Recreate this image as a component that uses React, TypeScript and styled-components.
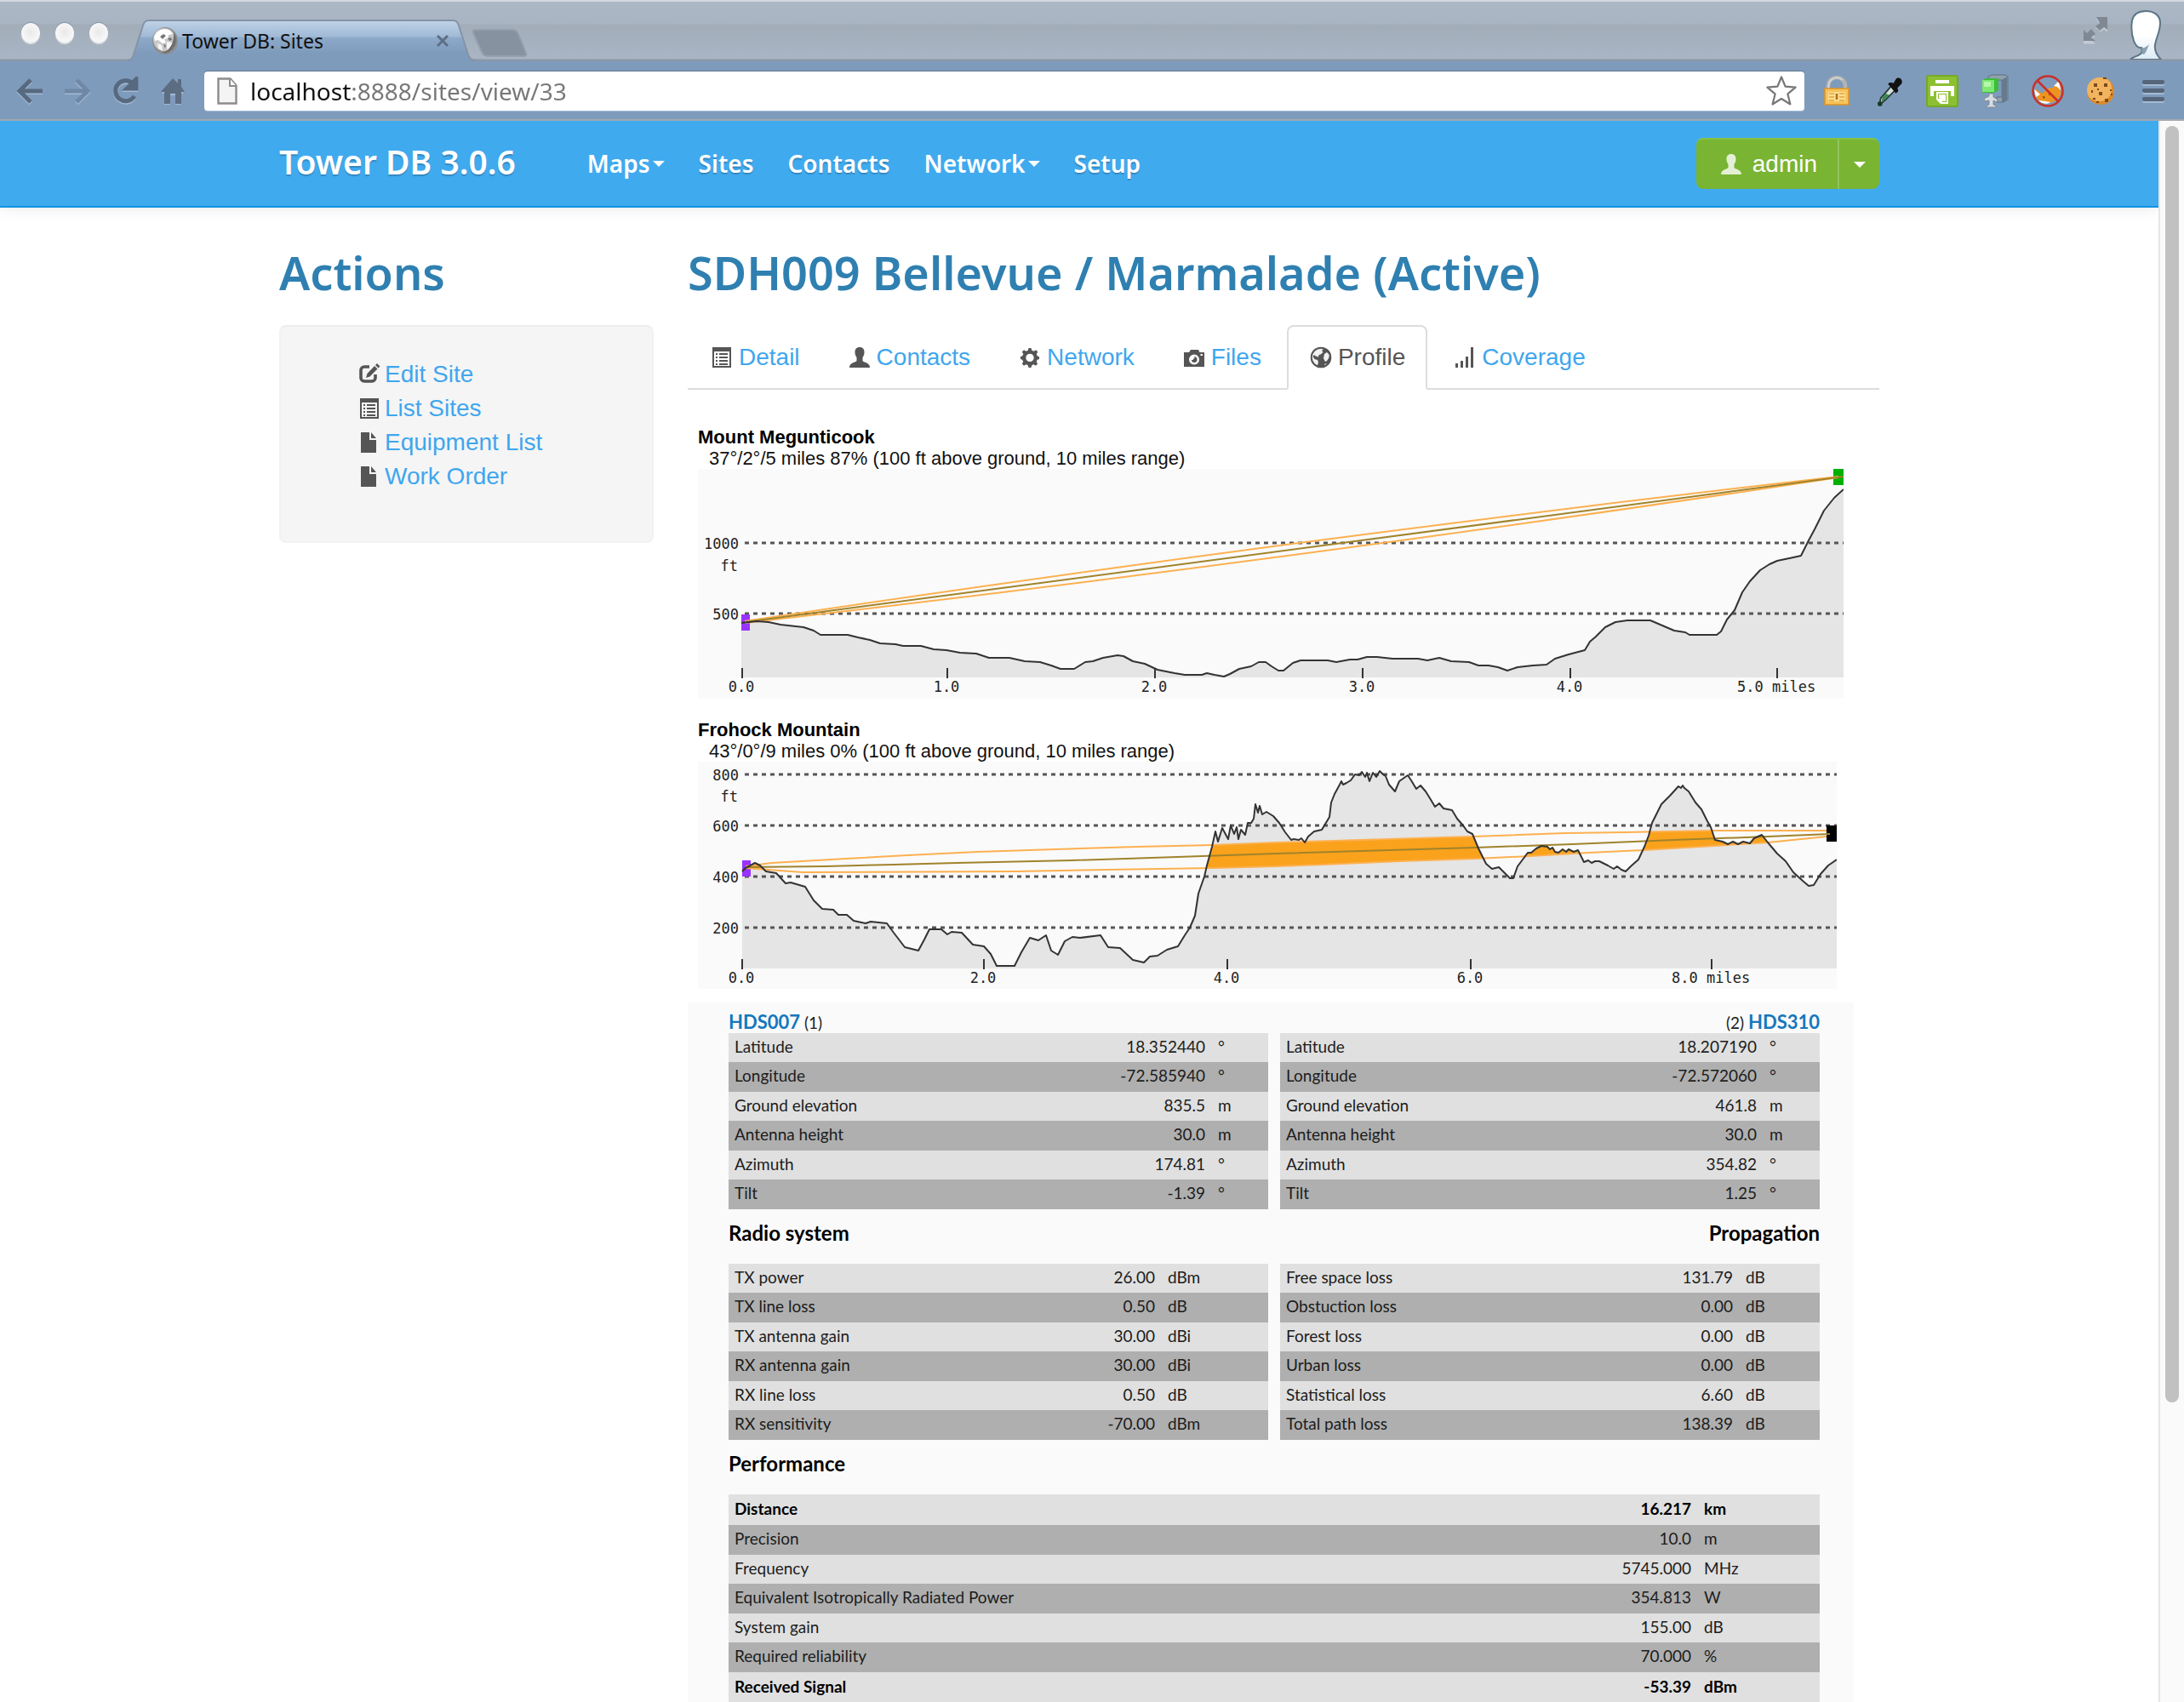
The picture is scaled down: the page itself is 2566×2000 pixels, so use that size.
import React from 'react';
import styled, { createGlobalStyle, css } from 'styled-components';

const ui = '"Noto Sans", "Open Sans", sans-serif';
const body = '"Liberation Sans", Arial, sans-serif';
const report = 'Lato, "Open Sans", sans-serif';

const GlobalStyle = createGlobalStyle`
  *, *::before, *::after { box-sizing: border-box; }
  html, body { margin: 0; background: #fff; }
  button { font: inherit; color: inherit; background: none; border: 0; padding: 0; cursor: pointer; }
  a { color: #40a6ee; text-decoration: none; }
  ul { list-style: none; margin: 0; padding: 0; }
  h1, h2, h3, p { margin: 0; }
  svg { display: block; flex: none; }
`;

const Window = styled.div`
  display: flex;
  flex-direction: column;
  height: 100vh;
  overflow: hidden;
  font-family: ${body};
  font-size: 28px;
  color: #555;
`;

/* ---------- browser frame ---------- */

const TabStrip = styled.header`
  display: flex;
  align-items: flex-end;
  height: 72px;
  flex: none;
  padding-left: 25px;
  border-top: 2px solid #d2d9e0;
  background: linear-gradient(#abb7c5 0, #a8b4c1 26px, #a2adb9 27px, #a9b5c4 67px, #8b98a8 68px);
`;

const Lights = styled.div`
  display: flex;
  gap: 18px;
  align-self: flex-start;
  margin-top: 25px;
  width: 125px;
`;

const Light = styled.button`
  width: 22px;
  height: 24px;
  border-radius: 50%;
  background: radial-gradient(circle at 50% 45%, #e9e9e9 0, #f7f7f7 60%, #dcdfe2 100%);
  box-shadow: 0 -1px 1px #8792a0, 0 1px 1px #d5dde6;
`;

const Tab = styled.div`
  position: relative;
  display: flex;
  align-items: center;
  width: 410px;
  height: 49px;
  padding: 0 32px 0 28px;
  font-family: ${ui};
  font-size: 23px;
  color: #111;
`;

const TabShape = styled.svg`
  position: absolute;
  left: 0;
  bottom: 0;
`;

const TabLabel = styled.span`
  position: relative;
  flex: 1;
  margin-left: 4px;
  white-space: nowrap;
`;

const Above = styled.span`
  position: relative;
  display: flex;
`;

const CloseTab = styled.button`
  position: relative;
  display: flex;
`;

const NewTab = styled.button`
  margin: 0 auto 5px -6px;
`;

const WindowTools = styled.div`
  display: flex;
  align-items: flex-start;
  align-self: stretch;
  gap: 24px;
  padding: 9px 25px 0 0;
`;

const FullscreenButton = styled.button`
  padding-top: 8px;
`;

const Toolbar = styled.div`
  display: flex;
  align-items: center;
  height: 70px;
  flex: none;
  padding: 2px 5px 0 7px;
  background: #7f9bbc;
  border-bottom: 2px solid #a3a9b0;
`;

const ToolButton = styled.button<{ $w: number }>`
  display: flex;
  align-items: center;
  justify-content: center;
  width: ${(p) => p.$w}px;
  height: 48px;
  flex: none;
`;

const Omnibox = styled.label`
  display: flex;
  align-items: center;
  flex: 1;
  height: 46px;
  margin: 0 7px 0 9px;
  padding: 0 8px 0 15px;
  background: #fff;
  border-radius: 4px;
  box-shadow: 0 -1px 1px #5f7690, 0 1px 1px #a9bfd8;
`;

const UrlInput = styled.input`
  flex: 1;
  min-width: 0;
  margin-left: 15px;
  padding: 0;
  border: 0;
  outline: 0;
  font: 28px ${ui};
  color: transparent;
  background: linear-gradient(90deg, #111 119px, #777 119px);
  -webkit-background-clip: text;
  background-clip: text;
`;

const Viewport = styled.div`
  display: flex;
  flex: 1;
  min-height: 0;
`;

const Page = styled.div`
  flex: 1;
  min-width: 0;
  overflow: hidden;
  background: #fff;
`;

const ScrollTrack = styled.div`
  width: 30px;
  flex: none;
  padding: 6px 6px 0 6px;
  border-left: 2px solid #e6e6e6;
  background: #fafafa;
`;

const ScrollThumb = styled.div`
  width: 16px;
  height: 81%;
  border-radius: 8px;
  background: #c1c1c1;
`;

/* ---------- site ---------- */

const Container = styled.div`
  display: flex;
  max-width: 1880px;
  margin: 0 auto;
`;

const Navbar = styled.nav`
  height: 102px;
  background: #40aaef;
  border-bottom: 2px solid #1392e0;
  box-shadow: 0 2px 16px rgba(0, 0, 0, 0.08);
  color: #fff;
  font-family: ${ui};
  text-shadow: 0 2px 1px rgba(0, 0, 0, 0.2);
  ${Container} {
    align-items: center;
    height: 100px;
  }
`;

const Brand = styled.a`
  color: #fff;
  font-size: 39px;
  font-weight: 600;
  margin: 0 84px 6px 0;
`;

const NavList = styled.ul`
  display: flex;
  gap: 40px;
  flex: 1;
  font-size: 28px;
  font-weight: 600;
`;

const navItem = css`
  display: flex;
  align-items: center;
  gap: 3px;
  color: #fff;
`;

const NavLink = styled.a`
  ${navItem}
`;

const NavButton = styled.button`
  ${navItem}
`;

const Caret = styled.span`
  border: 7px solid transparent;
  border-top-color: #fff;
  border-bottom: 0;
`;

const UserGroup = styled.div`
  display: flex;
  height: 60px;
  border-radius: 8px;
  overflow: hidden;
  background: #79b433;
  border-top: 2px solid #86c244;
  font-family: ${body};
  font-size: 28px;
`;

const UserButton = styled.button`
  display: flex;
  align-items: center;
  gap: 11px;
  padding: 0 24px 0 27px;
  border-right: 2px solid #93c45c;
`;

const UserToggle = styled.button`
  display: flex;
  align-items: center;
  justify-content: center;
  width: 47px;
`;

const Columns = styled(Container)`
  gap: 40px;
  padding-top: 36px;
`;

const Sidebar = styled.aside`
  width: 440px;
  flex: none;
`;

const Main = styled.main`
  flex: 1;
  min-width: 0;
`;

const Heading = styled.h2`
  margin-bottom: 22px;
  font: 600 54px/80px ${ui};
  color: #2f80b1;
  white-space: nowrap;
`;

const Well = styled.div`
  height: 256px;
  padding: 36px 38px 0 90px;
  border: 2px solid #f2f2f2;
  border-top-color: #ededed;
  border-radius: 8px;
  background: #f5f5f5;
`;

const ActionItem = styled.li`
  a {
    display: flex;
    align-items: center;
    gap: 4px;
    height: 40px;
  }
`;

const Tabs = styled.ul`
  display: flex;
  gap: 4px;
  border-bottom: 2px solid #ddd;
`;

const TabItem = styled.li<{ $active?: boolean }>`
  margin-bottom: -2px;
  a {
    display: flex;
    align-items: center;
    gap: 6px;
    height: 76px;
    padding: 0 24px;
    border: 2px solid transparent;
    border-radius: 8px 8px 0 0;
    ${(p) =>
      p.$active &&
      css`
        color: #555;
        background: #fff;
        border-color: #ddd;
        border-bottom-color: #fff;
      `}
  }
`;

const Profiles = styled.div`
  display: grid;
  gap: 24px;
  padding: 43px 0 16px 12px;
`;

const ProfileTitle = styled.h3`
  font-size: 22px;
  line-height: 25px;
  color: #000;
`;

const ProfileInfo = styled.p`
  padding-left: 13px;
  font-size: 22px;
  line-height: 25px;
  color: #111;
`;

const Chart = styled.svg`
  max-width: 100%;
  height: auto;
  text {
    font-family: "DejaVu Sans Mono", "Liberation Mono", monospace;
    font-size: 17px;
    fill: #222;
  }
`;

const Report = styled.section`
  max-width: 1370px;
  padding: 0 40px 40px 48px;
  background: #fafafa;
  font-family: ${report};
  font-size: 19px;
  color: #1c1c1c;
`;

const ReportHead = styled.div<{ $top?: boolean }>`
  display: flex;
  justify-content: space-between;
  height: ${(p) => (p.$top ? 36 : 64)}px;
  padding-top: ${(p) => (p.$top ? 6 : 11)}px;
  line-height: 34px;
`;

const ReportTitle = styled.h3`
  font-size: 24px;
  color: #000;
`;

const SiteName = styled.div`
  a {
    font-size: 22px;
    font-weight: 700;
    color: #1478bd;
  }
`;

const Pair = styled.div`
  display: grid;
  grid-template-columns: 1fr 1fr;
  gap: 14px;
`;

const Data = styled.table<{ $unit: number }>`
  width: 100%;
  border-collapse: collapse;
  table-layout: fixed;
  th,
  td {
    height: 34px;
    padding: 0 0 3px;
    font-weight: 400;
    line-height: 30px;
  }
  th {
    padding-left: 7px;
    text-align: left;
  }
  td {
    width: 200px;
    text-align: right;
  }
  td:last-child {
    width: ${(p) => p.$unit}px;
    padding-left: 15px;
    text-align: left;
  }
`;

const DataRow = styled.tr<{ $strong?: boolean }>`
  background: #e0e0e0;
  &:nth-child(even) {
    background: #afafaf;
  }
  &:nth-child(even) th,
  &:nth-child(even) td {
    height: 35px;
  }
  ${(p) =>
    p.$strong &&
    css`
      && th,
      && td {
        height: 36px;
        font-weight: 700;
        color: #000;
      }
    `}
`;

/* ---------- icons ---------- */

type GlyphName = 'edit' | 'list' | 'file' | 'user' | 'cog' | 'camera' | 'globe' | 'signal';

const glyphs: Record<GlyphName, React.ReactNode> = {
  edit: (
    <>
      <path d="M14 5H8a4 4 0 0 0-4 4v9a4 4 0 0 0 4 4h9a4 4 0 0 0 4-4v-4" fill="none" stroke="currentColor" strokeWidth="3.6" />
      <path d="M10 18l1.500-5L20 4l3.500 3.500-9 9z" />
      <path d="M21 3l2-2 3.500 3.500-2 2z" />
    </>
  ),
  list: (
    <>
      <path fillRule="evenodd" d="M3 2h22v24H3zm2 5v17h18V7z" />
      <path d="M7 9h2v2H7zm4 0h10v2H11zM7 13h2v2H7zm4 0h10v2H11zM7 17h2v2H7zm4 0h10v2H11zM7 21h2v2H7zm4 0h10v2H11z" />
    </>
  ),
  file: <path d="M4 2h10v9h8v15H4zM16 2l6 7h-6z" />,
  user: <path d="M14 2c4 0 5.500 2.500 5.500 6 0 3-1 4.500-2 6v4c1 2 8.500 2 8.500 8H2c0-6 7.500-6 8.500-8v-4c-1-1.500-2-3-2-6 0-3.500 1.500-6 5.500-6z" />,
  cog: (
    <path
      fillRule="evenodd"
      d="M12.500 3h3l.8 2.800 2.300 1 2.600-1.500 2.100 2.200-1.500 2.600 1 2.300L25 13v3l-2.300.7-1 2.300 1.400 2.500-2.100 2.200-2.500-1.500-2.300 1L15.500 26h-3l-.8-2.800-2.200-1L7 23.700l-2.200-2.200L6.200 19l-1-2.300L3 16v-3l2.300-.7 1-2.300-1.500-2.500L7 5.300l2.500 1.500 2.300-1zM14 9.700a4.700 4.700 0 1 0 0 9.400 4.700 4.700 0 0 0 0-9.400z"
    />
  ),
  camera: (
    <path
      fillRule="evenodd"
      d="M10 5h9l1.500 3H26v17H2V8h6zM14 10.500a6 6 0 1 0 0 12 6 6 0 0 0 0-12zM21.500 10v2h2.500v-2zM14 13a3.500 3.500 0 1 1 0 7c-1.900 0-3-1.300-3-3h1.800c0-1.200.7-2 1.900-2z"
    />
  ),
  globe: (
    <>
      <circle cx="14" cy="14" r="12" />
      <path fill="#fff" d="M9 4c3-1 6-1 8 0l-2 2 1.500 2-3 2.500-2 .5-.5 2.500-3-1L6 11l-1.500 2 2 3 3.500 1 1 3-1.500 4c-4-2-6.500-5-6.500-10C3 9 6 5.500 9 4zM18 10l3-2 3 3-1 4-2 3-2 1-2-4zM18 22l3-1-2 3z" opacity=".92" />
      <circle cx="14" cy="14" r="11.300" fill="none" stroke="currentColor" strokeWidth="2" />
    </>
  ),
  signal: <path d="M3 21h3v5H3zm6-3h3v8H9zm6-5h3v13h-3zm6-11h3v24h-3z" />,
};

const Glyph = ({ name, color = '#555' }: { name: GlyphName; color?: string }) => (
  <svg width="28" height="28" viewBox="0 0 28 28" fill="currentColor" color={color} aria-hidden="true">
    {glyphs[name]}
  </svg>
);

const NavIcon = ({ d, faded }: { d: string; faded?: boolean }) => (
  <svg width="32" height="34" viewBox="0 0 32 34" fill="none" aria-hidden="true">
    <path d={d} stroke="#a3bad4" strokeWidth="5" transform="translate(0 1.5)" />
    <path d={d} stroke={faded ? '#6f88a6' : '#57697f'} strokeWidth="5" />
  </svg>
);

const LockIcon = () => (
  <svg width="34" height="36" viewBox="0 0 34 36" aria-hidden="true">
    <path d="M7 16v-4a10 10 0 0 1 20 0v4" fill="none" stroke="#b4b4b4" strokeWidth="4.500" />
    <path d="M7.500 16v-4a9.500 9.500 0 0 1 16-7" fill="none" stroke="#d9d9d9" strokeWidth="1.500" />
    <rect x="3" y="15" width="28" height="19" fill="#f7c35a" stroke="#dd9426" strokeWidth="1.500" />
    <path d="M7 19h20v11H7z" fill="#fbdf92" />
    <path d="M8 21h6m6 0h6M8 25h6m6 0h6M8 29h6m6 0h6" stroke="#e2a63b" strokeWidth="1.500" />
    <path d="M17 21v7" stroke="#b06f10" strokeWidth="2.500" />
  </svg>
);

const DropperIcon = () => (
  <svg width="30" height="38" viewBox="0 0 32 38" aria-hidden="true">
    <path d="M18 13l5 5-12 12-5 4-2-1 1-5z" fill="#cfe0dc" stroke="#2c3a3a" strokeWidth="2" />
    <path d="M11 22l5 2-6 6-4 3 1-6z" fill="#3f8a55" />
    <path d="M14 10l3-2 4 1 3-5c3-4 10 0 7 6l-5 5 1 4-3 3z" fill="#111" />
    <circle cx="4" cy="35" r="3" fill="#173c24" />
  </svg>
);

const PrinterIcon = () => (
  <svg width="38" height="38" viewBox="0 0 38 38" aria-hidden="true">
    <rect x="1" y="1" width="36" height="36" rx="2" fill="#8cc032" stroke="#77a82a" strokeWidth="2" />
    <path d="M11 6h16v4H11zM5 13h28v12h-4v-6H9v6H5z" fill="#fff" />
    <path d="M12 20h14v14h-9l-5-5z" fill="#fff" />
    <path d="M14 22h10v10h-5v-4h-5z" fill="#8cc032" />
    <path d="M15 23h8v8h-3l-5-4z" fill="#fff" />
  </svg>
);

const ClampIcon = () => (
  <svg width="32" height="40" viewBox="0 0 32 40" aria-hidden="true">
    <path d="M8 3l4-2h16l3 2v27l-5 3h-8v-6h6V7H8z" fill="#8fa0ae" stroke="#5f7182" />
    <path d="M24 7l6-4v27l-4 3h-2z" fill="#667a8c" />
    <path d="M1 7l4-2h15v14l-5 3H1z" fill="#3dbb3d" />
    <path d="M1 7h14v14H1z" fill="#7de872" />
    <path d="M3 9h8v6H3z" fill="#b6f7aa" />
    <path d="M9 23h5v4l5 3-1 3-4-2v5l3 1v2H6v-2l3-1v-5l-5 1-1-3 6-3z" fill="#d6dde2" stroke="#7e8b96" />
  </svg>
);

const NoFoxIcon = () => (
  <svg width="40" height="40" viewBox="0 0 40 40" aria-hidden="true">
    <path d="M5 17l8 6 7-6 6-1 8-9 1 14c1 5-5 11-10 12-8 2-17-1-19-7z" fill="#ef9320" />
    <path d="M27 14l6-6 2 11-4-4zM4 18l7 6-5 3zM9 31c4 4 11 5 14 2l-6-1z" fill="#fff" />
    <path d="M14 26l3 1-2 2zM21 22l4 1-4 2z" fill="#6b3b08" />
    <circle cx="20" cy="20" r="17.500" fill="none" stroke="#c9302a" strokeWidth="2.500" />
    <path d="M8 8l24 24" stroke="#c9302a" strokeWidth="2.500" />
  </svg>
);

const CookieIcon = () => (
  <svg width="36" height="36" viewBox="0 0 36 36" aria-hidden="true">
    <path d="M18 2c9 0 15 6 16 15s-6 17-15 17S2 28 2 19 9 2 18 2z" fill="#dc8a28" />
    <path d="M17 2c9 0 14 5 14 13s-5 15-14 15S2 25 2 17 8 2 17 2z" fill="#f2b45e" />
    <g fill="#7d4a1c">
      <path d="M10 9h4v4h-4zM22 9h4v4h-4zM16 19h4v4h-4zM23 27h4v4h-4zM21 2h4v2h-4z" />
      <path d="M7 17h2v3H7zM29 16h2v2h-2zM30 21h2v2h-2zM14 15h2v2h-2zM9 26h3v2H9zM13 30h3v2h-3z" />
    </g>
  </svg>
);

const MenuIcon = () => (
  <svg width="28" height="32" viewBox="0 0 28 32" aria-hidden="true">
    <g fill="#a3bad4">
      <rect x="1" y="5" width="26" height="5" rx="2" />
      <rect x="1" y="15" width="26" height="5" rx="2" />
      <rect x="1" y="25" width="26" height="5" rx="2" />
    </g>
    <g fill="#566579">
      <rect x="1" y="3" width="26" height="5" rx="2" />
      <rect x="1" y="13" width="26" height="5" rx="2" />
      <rect x="1" y="23" width="26" height="5" rx="2" />
    </g>
  </svg>
);

const StarIcon = () => (
  <svg width="38" height="38" viewBox="0 0 38 38" aria-hidden="true">
    <path d="M19 2.500l4.600 11.200 12 .9-9.200 7.800 3 12.100L19 28l-10.400 6.500 3-12.100-9.200-7.800 12-.9z" fill="#fff" stroke="#777" strokeWidth="2.200" strokeLinejoin="round" />
  </svg>
);

const PageIcon = () => (
  <svg width="24" height="32" viewBox="0 0 24 32" aria-hidden="true">
    <path d="M1.500 1.500h14l7 8v21h-21z" fill="#f4f4f4" stroke="#8c8c8c" strokeWidth="2.400" />
    <path d="M15 1.500V10h7.500" fill="#fff" stroke="#8c8c8c" strokeWidth="2" />
  </svg>
);

const Favicon = () => (
  <svg width="32" height="34" viewBox="0 0 32 34" aria-hidden="true">
    <ellipse cx="16" cy="17" rx="15" ry="16" fill="#8d8d8d" />
    <ellipse cx="15" cy="15.500" rx="13" ry="13.500" fill="#c9c9c9" />
    <path d="M6 7c4-4 11-5 16-2l3 4-5 1-1 4-4 1 2 4-4 1-5-4-4 1-1-5z" fill="#fff" />
    <path d="M18 18l6 1 3 5-5 6-4-4zM7 20l5 2 1 7-5-3z" fill="#f5f5f5" />
    <path d="M10 12l4-3 3 2-4 4zM19 14l4-1 1 3-3 1zM14 21l3 1-1 4z" fill="#777" />
    <path d="M26 7c4 6 4 15-2 21-3 3-8 4-12 3 7-1 15-9 14-24z" fill="#6e6e6e" />
  </svg>
);

const AvatarIcon = () => (
  <svg width="40" height="59" viewBox="0 0 40 59" aria-hidden="true">
    <defs>
      <linearGradient id="head" x1="0" y1="0" x2="0" y2="1">
        <stop offset=".5" stopColor="#fff" />
        <stop offset="1" stopColor="#dcecf5" />
      </linearGradient>
    </defs>
    <path
      d="M2 59c3-4 11-4 13-8 1-2 1-4 0-6-4 1-7-3-9-8C3 29 3 20 4 13 6 5 13 2 20 2c10 0 17 5 17 14 0 11-5 17-6 26-1 7 2 12 7 17z"
      fill="url(#head)"
      stroke="#5c7586"
      strokeWidth="2"
    />
    <path d="M15 45c3 1 6-1 9-4-2 5-3 9-6 12l-3-1c1-2 1-5 0-7z" fill="#8aa3b2" />
  </svg>
);

const FullscreenIcon = () => (
  <svg width="30" height="34" viewBox="0 0 30 34" aria-hidden="true">
    <path d="M16 2h13v15l-4-3-4 3-6-5 4-5zM1 17l4 4 4-4 5 5-4 5 5 4H1z" fill="#c3ccd6" transform="translate(0 1.500)" />
    <path d="M16 1h13v15l-4-3-5 4-5-5 5-4zM1 16l4 4 5-5 5 6-5 4 5 4H1z" fill="#7f8893" />
  </svg>
);

/* ---------- elevation profiles ---------- */

interface ProfileData {
  title: string;
  info: string;
  box: [number, number, number, number];
  left: number;
  base: number;
  terrain: string;
  grid: { y: number; label: string }[];
  unitY: number;
  ticks: { x: number; label: string }[];
  miles: string;
  upper: string;
  center: string;
  lower: string;
  start: [number, number];
  end: [number, number];
  endColor: string;
}

const profiles: ProfileData[] = [
  {
    title: 'Mount Megunticook',
    info: '37°/2°/5 miles 87% (100 ft above ground, 10 miles range)',
    box: [820, 551, 1346, 270],
    left: 871,
    base: 796,
    terrain:
      '871,732 889,730 903,731 917,734 944,737 956,741 964,746 996,746 1008,749 1022,752 1034,756 1052,757 1061,759 1082,759 1097,763 1112,764 1128,767 1147,768 1162,773 1186,773 1204,777 1222,778 1235,782 1246,786 1262,786 1275,778 1284,777 1296,773 1313,770 1320,771 1331,777 1345,780 1360,787 1380,791 1392,793 1412,793 1418,791 1427,793 1438,795 1445,792 1456,786 1470,783 1479,778 1487,778 1494,783 1502,788 1508,788 1519,779 1528,776 1560,776 1570,778 1586,775 1595,775 1606,772 1618,772 1636,774 1666,774 1677,776 1691,773 1705,777 1726,778 1737,782 1749,782 1760,784 1771,788 1783,784 1801,782 1817,781 1827,774 1843,769 1862,764 1868,754 1875,748 1886,737 1898,731 1912,729 1939,729 1953,735 1967,741 1980,743 1985,746 2017,746 2022,742 2029,728 2038,717 2047,696 2056,683 2068,670 2079,663 2088,659 2107,655 2116,653 2125,635 2132,622 2143,600 2155,585 2166,575',
    grid: [
      { y: 638, label: '1000' },
      { y: 721, label: '500' },
    ],
    unitY: 671,
    ticks: [
      { x: 872, label: '0.0' },
      { x: 1113, label: '1.0' },
      { x: 1357, label: '2.0' },
      { x: 1601, label: '3.0' },
      { x: 1845, label: '4.0' },
      { x: 2088, label: '5.0' },
    ],
    miles: '5.0 miles',
    upper: 'M875 730Q1520 633 2160 560',
    center: 'M875 731L2166 560',
    lower: 'M875 732Q1520 658 2160 561',
    start: [871, 722],
    end: [2154, 551],
    endColor: '#00b000',
  },
  {
    title: 'Frohock Mountain',
    info: '43°/0°/9 miles 0% (100 ft above ground, 10 miles range)',
    box: [820, 895, 1338, 267],
    left: 872,
    base: 1138,
    terrain:
      '872,1024 876,1020 887,1014 893,1017 900,1024 912,1026 923,1038 929,1037 946,1042 956,1058 966,1068 979,1069 985,1075 995,1075 1003,1082 1017,1085 1023,1083 1042,1085 1050,1096 1063,1113 1079,1117 1086,1104 1092,1092 1106,1092 1113,1098 1118,1095 1130,1096 1143,1110 1156,1112 1164,1121 1171,1135 1192,1135 1200,1119 1210,1102 1220,1105 1229,1099 1235,1117 1243,1122 1251,1106 1260,1101 1269,1102 1293,1099 1302,1113 1316,1114 1331,1128 1344,1131 1351,1124 1360,1123 1371,1116 1384,1112 1392,1099 1398,1090 1404,1076 1408,1050 1415,1030 1418,1017 1424,995 1428,977 1431,989 1436,973 1443,986 1446,970 1450,980 1453,972 1455,986 1458,975 1463,981 1466,967 1470,967 1473,962 1475,945 1478,955 1480,947 1483,957 1488,954 1496,959 1503,967 1510,978 1517,987 1520,986 1526,987 1529,985 1533,990 1537,983 1544,977 1553,975 1559,965 1562,960 1564,943 1568,933 1574,922 1576,918 1578,922 1582,920 1587,917 1592,910 1597,911 1600,907 1604,913 1606,908 1609,918 1613,908 1617,913 1621,906 1625,910 1628,912 1632,922 1639,930 1644,918 1654,911 1658,917 1664,927 1669,923 1675,930 1680,938 1686,948 1691,944 1696,950 1706,952 1712,962 1719,970 1724,977 1730,980 1737,997 1746,1015 1753,1021 1761,1019 1774,1032 1778,1032 1783,1018 1795,1002 1799,1002 1805,997 1811,994 1818,995 1821,998 1824,996 1827,1001 1831,1002 1836,998 1840,1001 1843,998 1849,1001 1854,999 1861,1013 1866,1011 1870,1014 1874,1012 1879,1012 1889,1017 1896,1021 1900,1018 1905,1022 1910,1024 1916,1018 1925,1010 1932,995 1937,982 1941,967 1952,945 1962,935 1972,924 1975,926 1977,923 1979,926 1984,930 1992,943 1999,951 2006,965 2010,972 2015,987 2024,989 2030,992 2036,989 2042,992 2048,989 2056,991 2061,985 2070,981 2077,990 2088,1003 2098,1012 2107,1025 2118,1035 2125,1041 2131,1040 2139,1027 2148,1017 2158,1010',
    grid: [
      { y: 910, label: '800' },
      { y: 970, label: '600' },
      { y: 1030, label: '400' },
      { y: 1090, label: '200' },
    ],
    unitY: 942,
    ticks: [
      { x: 872, label: '0.0' },
      { x: 1156, label: '2.0' },
      { x: 1442, label: '4.0' },
      { x: 1728, label: '6.0' },
      { x: 2011, label: '8.0' },
    ],
    miles: '8.0 miles',
    upper: 'M876 1018L907 1014 994 1009 1066 1005 1148 1001 1240 998 1336 995 1425 993 1500 990 1599 987 1730 983 1838 979 1909 978 2013 976 2146 976',
    center: 'M876 1019L970 1018 1050 1016 1124 1014 1260 1011 1383 1007 1500 1003 1599 1000 1733 996 1847 992 1967 987 2077 983 2150 980',
    lower: 'M876 1020L889 1021 943 1025 1195 1024 1299 1022 1425 1020 1500 1018 1553 1016 1645 1012 1733 1009 1797 1006 1866 1002 1930 999 2013 994 2077 990 2146 983',
    start: [872, 1011],
    end: [2146, 970],
    endColor: '#000',
  },
];

const beamArea = (upper: string, lower: string) => {
  const back = lower
    .replace(/[ML]/g, ' ')
    .trim()
    .split(/\s+/)
    .reduce<string[][]>((acc, n, i) => {
      if (i % 2 === 0) acc.push([n]);
      else acc[acc.length - 1].push(n);
      return acc;
    }, [])
    .reverse()
    .map((p) => p.join(' '))
    .join(' ');
  return `${upper} ${back}Z`;
};

const ProfileChart = ({ p, obstructed }: { p: ProfileData; obstructed: boolean }) => {
  const [x, y, w, h] = p.box;
  const right = x + w;
  const clip = `terrain-${p.left}-${p.base}`;
  const area = `${p.left},${p.base} ${p.terrain} ${right},${p.base}`;
  return (
    <section>
      <ProfileTitle>{p.title}</ProfileTitle>
      <ProfileInfo>{p.info}</ProfileInfo>
      <Chart width={w} height={h} viewBox={p.box.join(' ')} role="img" aria-label={`${p.title} elevation profile`}>
        <defs>
          <clipPath id={clip}>
            <polygon points={area} />
          </clipPath>
        </defs>
        <rect x={x} y={y} width={w} height={h} fill="#fafafa" />
        <polygon points={area} fill="#e5e5e5" />
        {p.grid.map((g) => (
          <g key={g.label}>
            <line x1={875} x2={right} y1={g.y} y2={g.y} stroke="#555" strokeWidth="3" strokeDasharray="5 5" />
            <text x={868} y={g.y + 7} textAnchor="end">
              {g.label}
            </text>
          </g>
        ))}
        <text x={867} y={p.unitY} textAnchor="end">
          ft
        </text>
        {obstructed && <path d={beamArea(p.upper, p.lower)} fill="#faa21b" clipPath={`url(#${clip})`} />}
        <rect x={p.start[0]} y={p.start[1]} width="10" height="19" fill="#9933ff" />
        <rect x={p.end[0]} y={p.end[1]} width="12" height="19" fill={p.endColor} />
        <path d={p.upper} fill="none" stroke="#fdb050" strokeWidth="2" />
        <path d={p.lower} fill="none" stroke="#fdb050" strokeWidth="2" />
        <path d={p.center} fill="none" stroke="#a0832c" strokeWidth="2" />
        <polyline points={p.terrain} fill="none" stroke="#333" strokeWidth="2" strokeLinejoin="round" />
        {p.ticks.map((t, i) => {
          const last = i === p.ticks.length - 1;
          return (
            <g key={t.label}>
              <line x1={t.x} x2={t.x} y1={p.base - 11} y2={p.base + 1} stroke="#333" strokeWidth="2" />
              <text x={last ? t.x - 47 : t.x - 1} y={p.base + 17} textAnchor={last ? 'start' : 'middle'}>
                {last ? p.miles : t.label}
              </text>
            </g>
          );
        })}
      </Chart>
    </section>
  );
};

/* ---------- report data ---------- */

type Row = [string, string, string, boolean?];

const siteA: Row[] = [
  ['Latitude', '18.352440', '°'],
  ['Longitude', '-72.585940', '°'],
  ['Ground elevation', '835.5', 'm'],
  ['Antenna height', '30.0', 'm'],
  ['Azimuth', '174.81', '°'],
  ['Tilt', '-1.39', '°'],
];
const siteB: Row[] = [
  ['Latitude', '18.207190', '°'],
  ['Longitude', '-72.572060', '°'],
  ['Ground elevation', '461.8', 'm'],
  ['Antenna height', '30.0', 'm'],
  ['Azimuth', '354.82', '°'],
  ['Tilt', '1.25', '°'],
];
const radio: Row[] = [
  ['TX power', '26.00', 'dBm'],
  ['TX line loss', '0.50', 'dB'],
  ['TX antenna gain', '30.00', 'dBi'],
  ['RX antenna gain', '30.00', 'dBi'],
  ['RX line loss', '0.50', 'dB'],
  ['RX sensitivity', '-70.00', 'dBm'],
];
const propagation: Row[] = [
  ['Free space loss', '131.79', 'dB'],
  ['Obstuction loss', '0.00', 'dB'],
  ['Forest loss', '0.00', 'dB'],
  ['Urban loss', '0.00', 'dB'],
  ['Statistical loss', '6.60', 'dB'],
  ['Total path loss', '138.39', 'dB'],
];
const performance: Row[] = [
  ['Distance', '16.217', 'km', true],
  ['Precision', '10.0', 'm'],
  ['Frequency', '5745.000', 'MHz'],
  ['Equivalent Isotropically Radiated Power', '354.813', 'W'],
  ['System gain', '155.00', 'dB'],
  ['Required reliability', '70.000', '%'],
  ['Received Signal', '-53.39', 'dBm', true],
];

const DataTable = ({ rows, unit }: { rows: Row[]; unit: number }) => (
  <Data $unit={unit}>
    <tbody>
      {rows.map(([label, value, u, strong]) => (
        <DataRow key={label} $strong={strong}>
          <th scope="row">{label}</th>
          <td>{value}</td>
          <td>{u}</td>
        </DataRow>
      ))}
    </tbody>
  </Data>
);

const tabs: { icon: GlyphName; label: string }[] = [
  { icon: 'list', label: 'Detail' },
  { icon: 'user', label: 'Contacts' },
  { icon: 'cog', label: 'Network' },
  { icon: 'camera', label: 'Files' },
  { icon: 'globe', label: 'Profile' },
  { icon: 'signal', label: 'Coverage' },
];

const actions: { icon: GlyphName; label: string }[] = [
  { icon: 'edit', label: 'Edit Site' },
  { icon: 'list', label: 'List Sites' },
  { icon: 'file', label: 'Equipment List' },
  { icon: 'file', label: 'Work Order' },
];

const extensions: { label: string; icon: React.ReactNode }[] = [
  { label: 'Passwords', icon: <LockIcon /> },
  { label: 'Color picker', icon: <DropperIcon /> },
  { label: 'Print', icon: <PrinterIcon /> },
  { label: 'Clamp', icon: <ClampIcon /> },
  { label: 'Blocker', icon: <NoFoxIcon /> },
  { label: 'Cookies', icon: <CookieIcon /> },
  { label: 'Menu', icon: <MenuIcon /> },
];

const BrowserFrame = () => (
  <>
    <TabStrip>
      <Lights>
        <Light aria-label="Close window" />
        <Light aria-label="Minimize" />
        <Light aria-label="Zoom" />
      </Lights>
      <Tab>
        <TabShape width="410" height="49" viewBox="0 0 410 49" aria-hidden="true">
          <defs>
            <linearGradient id="tab" x1="0" y1="0" x2="0" y2="1">
              <stop offset="0" stopColor="#c0d3e8" />
              <stop offset=".4" stopColor="#9fb9d5" />
              <stop offset=".42" stopColor="#8eaaca" />
              <stop offset=".8" stopColor="#7f9bbc" />
            </linearGradient>
          </defs>
          <path d="M0 49c4 0 6-3 7-7L18 7c1-4 3-6 7-6h357c4 0 6 2 7 6l11 35c1 4 4 7 9 7z" fill="url(#tab)" />
          <path d="M0 48c4 0 6-3 7-7L18 7c1-4 3-6 7-6h357c4 0 6 2 7 6l11 34c1 4 4 7 9 7" fill="none" stroke="#8593a5" strokeWidth="2" />
        </TabShape>
        <Above>
          <Favicon />
        </Above>
        <TabLabel>Tower DB: Sites</TabLabel>
        <CloseTab aria-label="Close tab">
          <svg width="16" height="16" viewBox="0 0 16 16" aria-hidden="true">
            <path d="M2 2l12 12M14 2L2 14" stroke="#5d6f85" strokeWidth="3" />
          </svg>
        </CloseTab>
      </Tab>
      <NewTab aria-label="New tab">
        <svg width="66" height="33" viewBox="0 0 66 33" aria-hidden="true">
          <path d="M5 1h43c4 0 6 2 7 5l9 22c1 3 0 4-3 4H19c-4 0-6-2-7-5L2 5C1 2 2 1 5 1z" fill="#8792a0" stroke="#94a0ae" strokeWidth="2" />
        </svg>
      </NewTab>
      <WindowTools>
        <FullscreenButton aria-label="Full screen">
          <FullscreenIcon />
        </FullscreenButton>
        <button aria-label="Profile">
          <AvatarIcon />
        </button>
      </WindowTools>
    </TabStrip>
    <Toolbar>
      <ToolButton $w={56} aria-label="Back">
        <NavIcon d="M31 17H6M17 4L4 17l13 13" />
      </ToolButton>
      <ToolButton $w={56} aria-label="Forward">
        <NavIcon faded d="M1 17h25M15 4l13 13-13 13" />
      </ToolButton>
      <ToolButton $w={56} aria-label="Reload">
        <NavIcon d="M27 23A12 12 0 1 1 25 8M29 3v11H18zM28 6v6h-6z" />
      </ToolButton>
      <ToolButton $w={56} aria-label="Home">
        <svg width="32" height="34" viewBox="0 0 32 34" aria-hidden="true">
          <path d="M16 5l13 15h-3v13h-7V22h-6v11H6V20H3z" fill="#a3bad4" />
          <path d="M16 2l6 6V3h4v9l4 6h-4v14h-7V20h-6v12H6V18H2z" fill="#5d6d81" />
        </svg>
      </ToolButton>
      <Omnibox>
        <PageIcon />
        <UrlInput aria-label="Address" defaultValue="localhost:8888/sites/view/33" />
        <StarIcon />
      </Omnibox>
      {extensions.map((e) => (
        <ToolButton key={e.label} $w={62} aria-label={e.label}>
          {e.icon}
        </ToolButton>
      ))}
    </Toolbar>
  </>
);

export default function App() {
  return (
    <Window>
      <GlobalStyle />
      <BrowserFrame />
      <Viewport>
        <Page>
          <Navbar>
            <Container>
              <Brand href="#">Tower DB 3.0.6</Brand>
              <NavList>
                <li>
                  <NavButton>
                    Maps
                    <Caret />
                  </NavButton>
                </li>
                <li>
                  <NavLink href="#">Sites</NavLink>
                </li>
                <li>
                  <NavLink href="#">Contacts</NavLink>
                </li>
                <li>
                  <NavButton>
                    Network
                    <Caret />
                  </NavButton>
                </li>
                <li>
                  <NavLink href="#">Setup</NavLink>
                </li>
              </NavList>
              <UserGroup>
                <UserButton>
                  <Glyph name="user" color="#e4f0d6" />
                  admin
                </UserButton>
                <UserToggle aria-label="User menu">
                  <Caret />
                </UserToggle>
              </UserGroup>
            </Container>
          </Navbar>
          <Columns>
            <Sidebar>
              <Heading>Actions</Heading>
              <Well>
                <ul>
                  {actions.map((a) => (
                    <ActionItem key={a.label}>
                      <a href="#">
                        <Glyph name={a.icon} />
                        {a.label}
                      </a>
                    </ActionItem>
                  ))}
                </ul>
              </Well>
            </Sidebar>
            <Main>
              <Heading>SDH009 Bellevue / Marmalade (Active)</Heading>
              <Tabs>
                {tabs.map((t) => (
                  <TabItem key={t.label} $active={t.label === 'Profile'}>
                    <a href="#">
                      <Glyph name={t.icon} />
                      {t.label}
                    </a>
                  </TabItem>
                ))}
              </Tabs>
              <Profiles>
                {profiles.map((p, i) => (
                  <ProfileChart key={p.title} p={p} obstructed={i === 1} />
                ))}
              </Profiles>
              <Report>
                <ReportHead $top>
                  <SiteName>
                    <a href="#">HDS007</a> (1)
                  </SiteName>
                  <SiteName>
                    (2) <a href="#">HDS310</a>
                  </SiteName>
                </ReportHead>
                <Pair>
                  <DataTable rows={siteA} unit={74} />
                  <DataTable rows={siteB} unit={74} />
                </Pair>
                <ReportHead>
                  <ReportTitle>Radio system</ReportTitle>
                  <ReportTitle>Propagation</ReportTitle>
                </ReportHead>
                <Pair>
                  <DataTable rows={radio} unit={133} />
                  <DataTable rows={propagation} unit={102} />
                </Pair>
                <ReportHead>
                  <ReportTitle>Performance</ReportTitle>
                </ReportHead>
                <DataTable rows={performance} unit={151} />
              </Report>
            </Main>
          </Columns>
        </Page>
        <ScrollTrack>
          <ScrollThumb />
        </ScrollTrack>
      </Viewport>
    </Window>
  );
}
